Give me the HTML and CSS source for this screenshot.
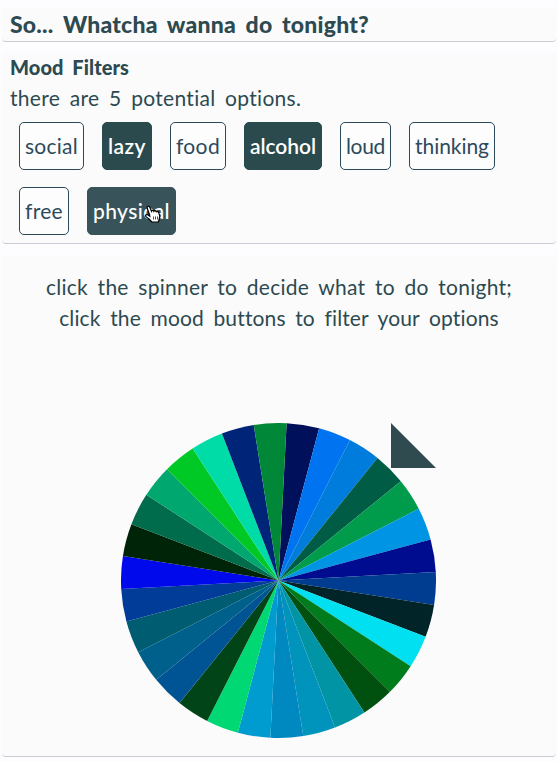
FILE: index.html
```html
<!DOCTYPE html>
<html lang="en">
<head>
<meta charset="utf-8">
<title>Whatcha wanna do tonight?</title>
<link rel="stylesheet" href="styles.css">
</head>
<body>
<header class="card header"><h1><span class="fit" data-w="359">So... Whatcha wanna do tonight?</span></h1></header>
<section class="card filters">
<h2><span class="fit" data-w="119">Mood Filters</span></h2>
<p class="count"><span class="fit" data-w="292">there are 5 potential options.</span></p>
<div class="moods">
<button class="mood"><span class="fit" data-w="53">social</span></button>
<button class="mood on"><span class="fit" data-w="38">lazy</span></button>
<button class="mood"><span class="fit" data-w="44">food</span></button>
<button class="mood on"><span class="fit" data-w="66">alcohol</span></button>
<button class="mood"><span class="fit" data-w="39">loud</span></button>
<button class="mood"><span class="fit" data-w="74">thinking</span></button>
<button class="mood"><span class="fit" data-w="38">free</span></button>
<button class="mood on hover"><span class="fit" data-w="77">physical</span>
<svg class="cursor" viewBox="0 0 16 18" aria-hidden="true"><path d="M4.500 9.500 2.200 3.300C1.600 1.300 3.900.500 4.800 2.200L6.500 6.200C6.800 5 8.500 5 8.900 6.300 9.400 5.300 11 5.500 11.300 6.800 12.200 6.100 13.500 6.700 13.800 7.900L14.800 11.200 14.200 14.500 13.300 17H6.800L4.500 14.500 1 11.600C-.100 10.300 1.200 9 2.600 9.800L4.800 11.200Z"/><path class="fingers" d="M8.500 11.500v3M10.500 11.500v3M12.500 11.500v3"/></svg></button>
</div>
</section>
<main class="card stage">
<p class="help"><span class="fit" data-w="466">click the spinner to decide what to do tonight;</span><br><span class="fit" data-w="439">click the mood buttons to filter your options</span></p>
<div class="spinner"><svg class="wheel" viewBox="-157.5 -157.5 315 315"></svg><svg class="pointer" viewBox="0 0 45 45"><path d="M0 0V45H45Z"/></svg></div>
</main>
<script src="wheel.js"></script>
</body>
</html>
```
FILE: styles.css
```css
* { box-sizing: border-box; }
body { margin: 0; padding: 8px 2px 0; background: #fdfdff; color: #2c4a50; font: 21px/31px Lato, "Open Sans", sans-serif; }
h1, h2, p { margin: 0; }
.card { background: #fbfbfb; border-bottom: 1px solid #c9ccd4; border-radius: 4px; padding: 0 8px; }
.fit { display: inline-block; white-space: nowrap; }
.header { height: 34px; }
h1 { font-size: 23px; line-height: 33px; font-weight: 900; }
.filters { height: 192px; margin-top: 10px; }
h2 { font-size: 20px; line-height: 30px; font-weight: 900; }
.moods { display: flex; flex-wrap: wrap; gap: 17px 18px; padding: 9px 9px 0; }
.mood { position: relative; height: 48px; padding: 0 5px 2px; border: 1px solid #2c4a5c; border-radius: 5px; background: #fdfdfd; color: #2c4a5c; font: inherit; }
.on { background: #2a4a4e; border-color: #2a4a4e; color: #fff; font-weight: 600; }
.hover { background: #38545a; border-color: #38545a; font-weight: 500; }
.cursor { position: absolute; left: 57px; top: 17px; width: 16px; height: 18px; fill: #fff; stroke: #000; stroke-width: 1.2; }
.fingers { stroke-width: .7; }
.stage { height: 501px; margin-top: 12px; padding-top: 15px; }
.help { text-align: center; }
.spinner { position: relative; width: 315px; height: 315px; margin: 90px 0 0 111px; }
.wheel { display: block; width: 315px; height: 315px; }
.pointer { position: absolute; right: 0; top: 0; width: 45px; height: 45px; fill: #2f4b50; }
```
FILE: wheel.js
```js
const colors = ['00105a','0074f0','007cdc','005c44','009c4c','0094e4','000c90','003c90','002428','00e0f0','007c1c','005010','0094a4','0094bc','0088c0','009cd0','00d874','004418','005494','00608c','005c70','003c98','0008ec','002408','006c4c','00a870','00c824','00dca8','002478','008838'];
const point = deg => {
  const a = deg * Math.PI / 180;
  return (157.5 * Math.sin(a)).toFixed(2) + ' ' + (-157.5 * Math.cos(a)).toFixed(2);
};
document.querySelector('.wheel').innerHTML = colors.map((c, i) => {
  const start = 2.95 + i * 12;
  return `<path fill="#${c}" d="M0 0L${point(start)}A157.5 157.5 0 0 1 ${point(start + 12)}Z"/>`;
}).join('');

// Spread each label's letters and words over its design width.
for (const el of document.querySelectorAll('.fit')) {
  const target = Number(el.dataset.w);
  const text = el.textContent;
  const spaces = text.split(' ').length - 1;
  const wordGap = spaces ? 4 : 0;
  el.style.wordSpacing = wordGap + 'px';
  const extra = target - el.getBoundingClientRect().width;
  el.style.letterSpacing = extra / text.length + 'px';
}
```
